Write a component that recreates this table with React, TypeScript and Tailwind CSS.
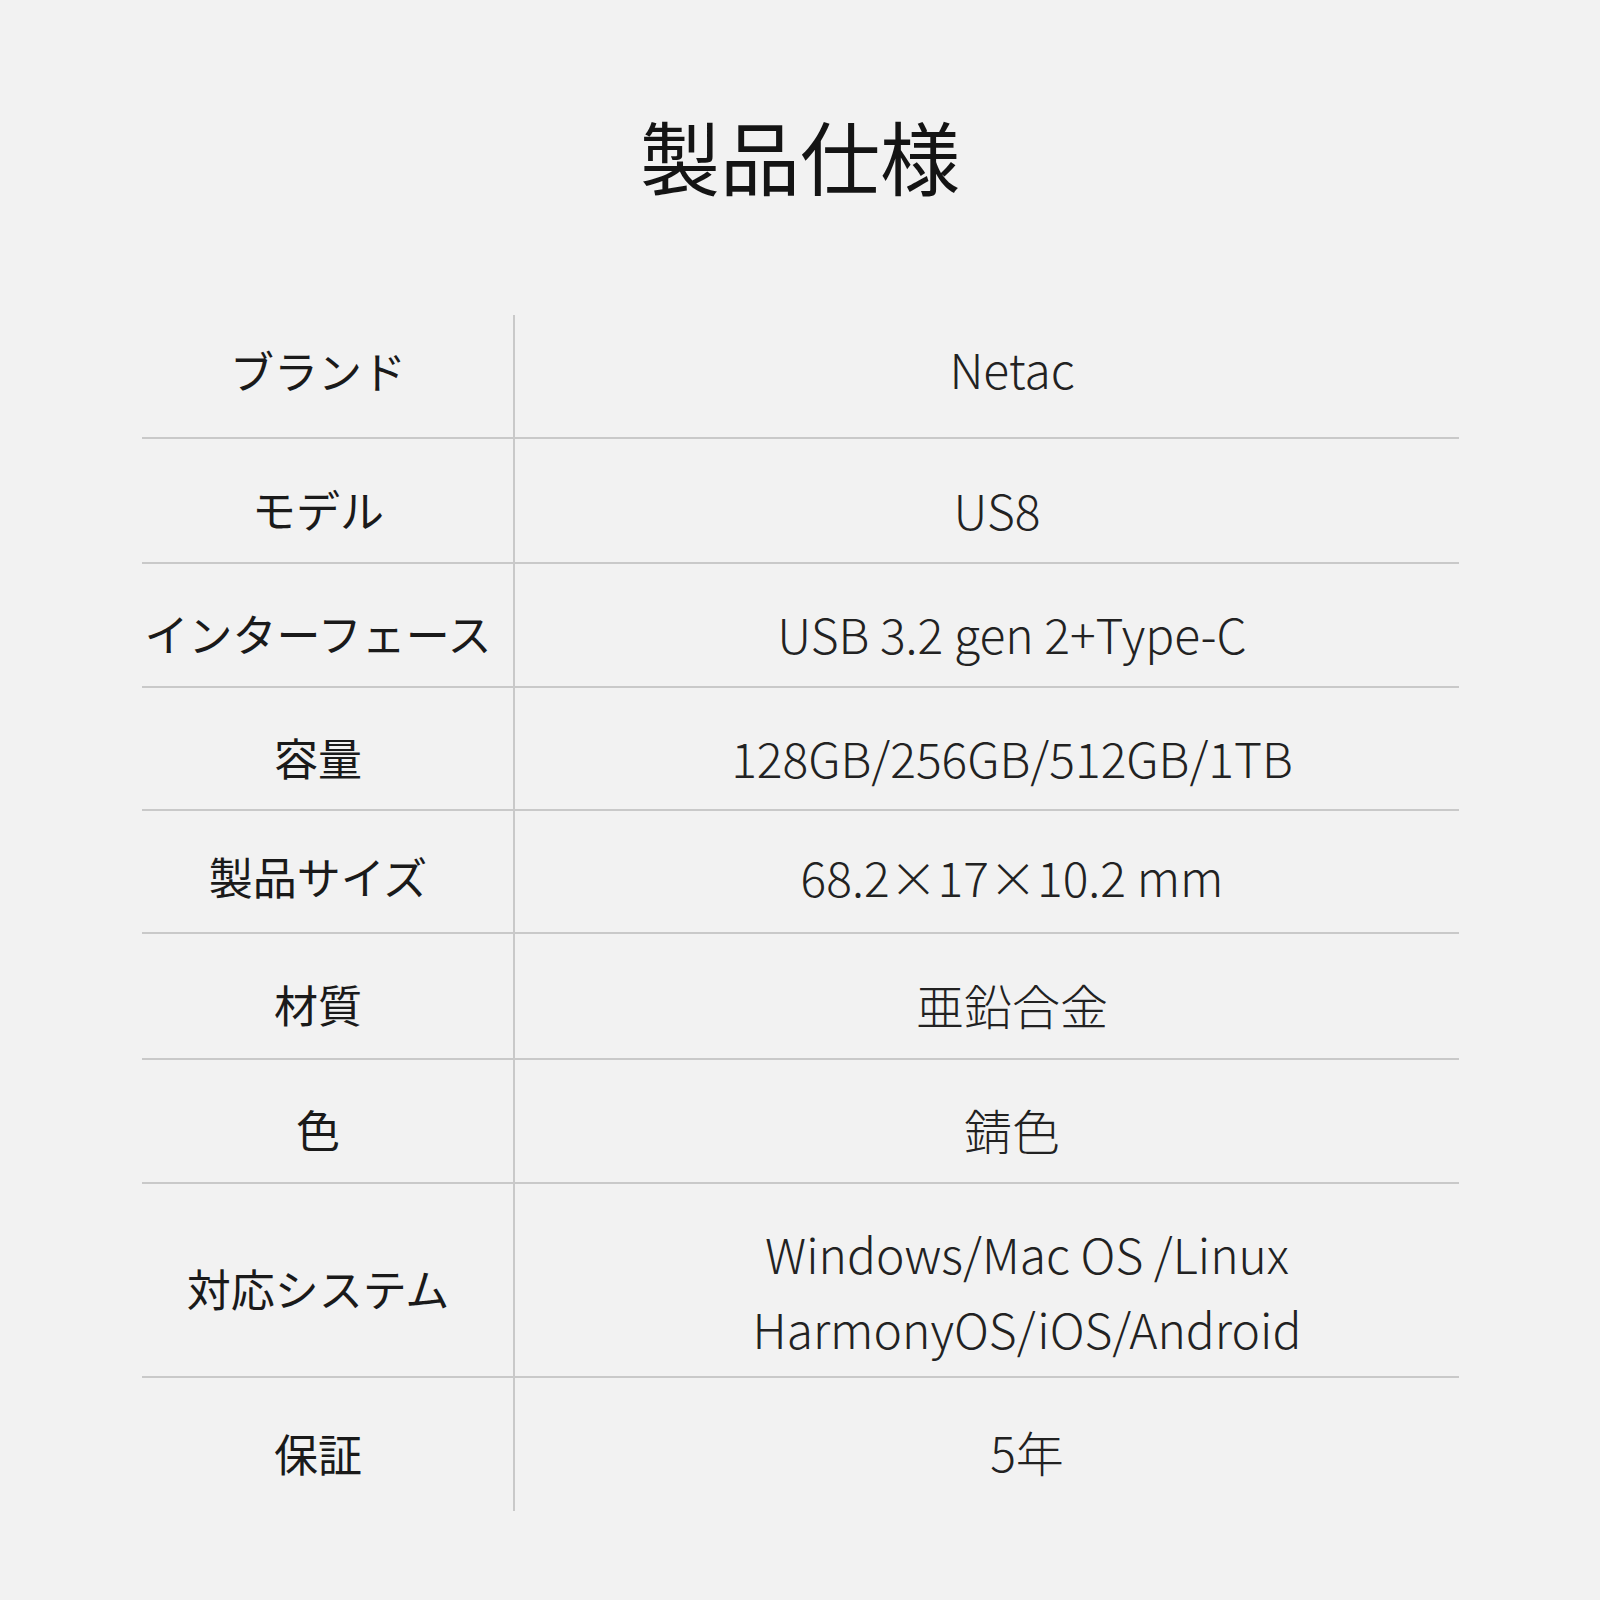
const specs: { label: string; value: string[]; h: string; pad: string; vpad: string }[] = [
  { label: 'ブランド', value: ['Netac'], h: 'h-[124px]', pad: 'pb-3', vpad: 'pl-[50px] pb-4' },
  { label: 'モデル', value: ['US8'], h: 'h-[125px]', pad: 'pt-4', vpad: 'pl-[20px] pt-4' },
  { label: 'インターフェース', value: ['USB 3.2 gen 2+Type-C'], h: 'h-[124px]', pad: 'pt-4', vpad: 'pl-[50px] pt-4' },
  { label: '容量', value: ['128GB/256GB/512GB/1TB'], h: 'h-[123px]', pad: 'pt-4', vpad: 'pl-[50px] pt-4' },
  { label: '製品サイズ', value: ['68.2×17×10.2 mm'], h: 'h-[123px]', pad: 'pt-2', vpad: 'pl-[50px] pt-2' },
  { label: '材質', value: ['亜鉛合金'], h: 'h-[126px]', pad: 'pt-4', vpad: 'pl-[50px] pt-4' },
  { label: '色', value: ['錆色'], h: 'h-[124px]', pad: 'pt-4', vpad: 'pl-[50px] pt-4' },
  {
    label: '対応システム',
    value: ['Windows/Mac OS /Linux', 'HarmonyOS/iOS/Android'],
    h: 'h-[194px]',
    pad: 'pt-4',
    vpad: 'pl-[80px] pt-5',
  },
  { label: '保証', value: ['5年'], h: 'h-[133px]', pad: 'pt-4', vpad: 'pl-[80px] pt-3' },
];

export default function App() {
  return (
    <div
      className="w-[1600px] h-[1600px] bg-[#f2f2f2] text-[#1a1a1a] flex flex-col items-center"
      style={{ fontFamily: '"Noto Sans CJK JP", "Noto Sans", sans-serif' }}
    >
      <h1 className="mt-[114px] text-[80px] leading-none font-normal text-[#141414]">
        製品仕様
      </h1>

      <div className="mt-[121px] w-[1317px] self-start ml-[142px] flex flex-col">
        {specs.map((row, i) => (
          <div
            key={row.label}
            className={`${row.h} flex ${i < specs.length - 1 ? 'border-b-2 border-[#c9c9c9]' : ''}`}
          >
            <div
              className={`w-[371px] shrink-0 flex items-center justify-center pr-[19px] ${row.pad} text-[44px] leading-none`}
            >
              {row.label}
            </div>
            <div className="w-[2px] bg-[#c9c9c9] shrink-0" />
            <div
              className={`flex-1 flex flex-col items-center justify-center gap-[27px] ${row.vpad} text-[48px] leading-none font-light text-[#222]`}
              style={{
                fontFamily:
                  '"Noto Sans CJK JP Light", "Noto Sans CJK JP DemiLight", "Noto Sans CJK JP", sans-serif',
              }}
            >
              {row.value.map((v) => (
                <span key={v}>{v}</span>
              ))}
            </div>
          </div>
        ))}
      </div>
    </div>
  );
}
